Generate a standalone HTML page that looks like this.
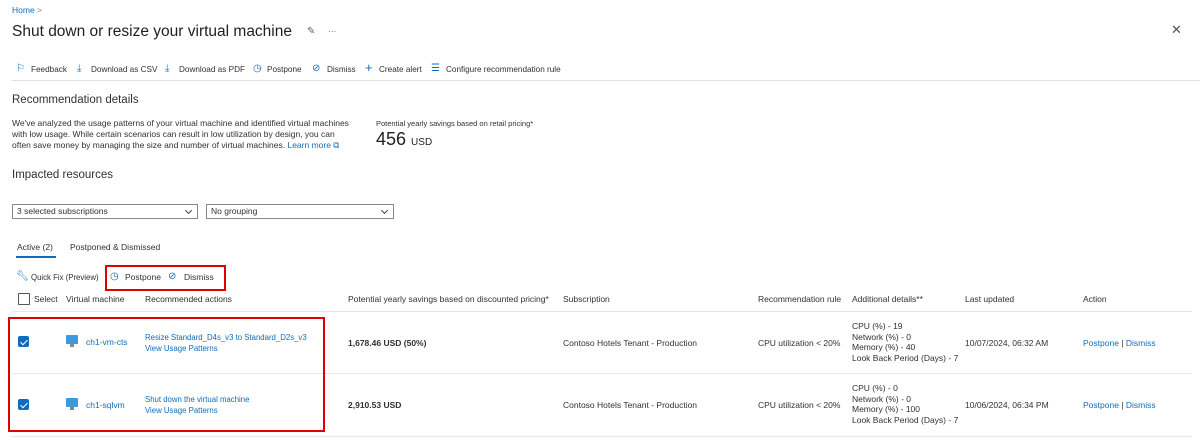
<!DOCTYPE html><html><head><style>
body{margin:0;width:1200px;height:445px;background:#fff;font-family:"Liberation Sans",sans-serif;color:#323130;position:relative;overflow:hidden}
.a{position:absolute;white-space:nowrap;font-size:8.5px;line-height:11px}
.l{color:#0f6cbd}
.h{font-size:8.5px;color:#323130}
.rb{position:absolute;border:2px solid #e00000}
.ln{position:absolute;height:1px;background:#e8e8e8}
.dd{position:absolute;height:13px;border:1px solid #8a8886;font-size:8.5px;line-height:13px;padding-left:4px;box-sizing:content-box}
.dd:after{content:"";position:absolute;right:6px;top:3px;width:4px;height:4px;border-right:1px solid #444;border-bottom:1px solid #444;transform:rotate(45deg)}
.cb{position:absolute;width:11px;height:11px;background:#0f6cbd;border-radius:2px}
.cb:after{content:"";position:absolute;left:3.5px;top:1.5px;width:3px;height:6px;border-right:1px solid #fff;border-bottom:1px solid #fff;transform:rotate(45deg)}
.vm{position:absolute;width:12px;height:9px;background:#3a9bdc;border-radius:1px}
.vm:after{content:"";position:absolute;left:4px;top:9px;width:4px;height:3px;background:#888}
.ic{color:#0f6cbd;font-size:10px}
</style></head><body>
<div class="a l" style="left:12px;top:5px">Home <span style="color:#888">&gt;</span></div>
<div class="a" style="left:12px;top:22px;font-size:15.5px;line-height:20px;color:#201f1e">Shut down or resize your virtual machine</div>
<div class="a" style="left:307px;top:26px;font-size:10px;color:#666">✎</div>
<div class="a" style="left:328px;top:26px;color:#666">···</div>
<div class="a" style="left:1171px;top:24px;font-size:13px;color:#555">✕</div>
<div class="a ic" style="left:16px;top:63px">⚐</div><div class="a" style="left:31px;top:64px;font-size:8.2px">Feedback</div>
<div class="a ic" style="left:77px;top:63px">⤓</div><div class="a" style="left:91px;top:64px;font-size:8.2px">Download as CSV</div>
<div class="a ic" style="left:165px;top:63px">⤓</div><div class="a" style="left:179px;top:64px;font-size:8.2px">Download as PDF</div>
<div class="a ic" style="left:253px;top:63px">◷</div><div class="a" style="left:267px;top:64px;font-size:8.2px">Postpone</div>
<div class="a ic" style="left:312px;top:63px">⊘</div><div class="a" style="left:327px;top:64px;font-size:8.2px">Dismiss</div>
<div class="a ic" style="left:365px;top:62px;font-size:13px">+</div><div class="a" style="left:379px;top:64px;font-size:8.2px">Create alert</div>
<div class="a ic" style="left:431px;top:63px">☰</div><div class="a" style="left:446px;top:64px;font-size:8.2px">Configure recommendation rule</div>
<div class="ln" style="left:12px;top:80px;width:1188px;background:#e1dfdd"></div>
<div class="a" style="left:12px;top:93px;font-size:11.5px;line-height:14px">Recommendation details</div>
<div class="a" style="left:12px;top:118px;line-height:11.2px">We've analyzed the usage patterns of your virtual machine and identified virtual machines<br>with low usage. While certain scenarios can result in low utilization by design, you can<br>often save money by managing the size and number of virtual machines. <span class="l">Learn more ⧉</span></div>
<div class="a" style="left:376px;top:118px;font-size:7.5px">Potential yearly savings based on retail pricing*</div>
<div class="a" style="left:376px;top:129px;font-size:18px;line-height:20px;color:#201f1e">456 <span style="font-size:10px">USD</span></div>
<div class="a" style="left:12px;top:168px;font-size:11.5px;line-height:14px">Impacted resources</div>
<div class="dd" style="left:12px;top:204px;width:180px">3 selected subscriptions</div>
<div class="dd" style="left:206px;top:204px;width:182px">No grouping</div>
<div class="a" style="left:17px;top:242px">Active (2)</div>
<div class="a" style="left:70px;top:242px">Postponed &amp; Dismissed</div>
<div class="ln" style="left:16px;top:256px;width:40px;height:2px;background:#0f6cbd"></div>
<div class="a ic" style="left:16px;top:271px">🔧︎</div><div class="a" style="left:31px;top:272px;font-size:7.8px">Quick Fix (Preview)</div>
<div class="a ic" style="left:110px;top:271px">◷</div><div class="a" style="left:125px;top:272px">Postpone</div>
<div class="a ic" style="left:168px;top:271px">⊘</div><div class="a" style="left:184px;top:272px">Dismiss</div>
<div class="rb" style="left:105px;top:265px;width:117px;height:22px"></div>
<div style="position:absolute;left:18px;top:293px;width:10px;height:10px;border:1px solid #555;border-radius:1px"></div>
<div class="a h" style="left:34px;top:294px">Select</div>
<div class="a h" style="left:66px;top:294px">Virtual machine</div>
<div class="a h" style="left:145px;top:294px">Recommended actions</div>
<div class="a h" style="left:348px;top:294px">Potential yearly savings based on discounted pricing*</div>
<div class="a h" style="left:563px;top:294px">Subscription</div>
<div class="a h" style="left:758px;top:294px">Recommendation rule</div>
<div class="a h" style="left:852px;top:294px">Additional details**</div>
<div class="a h" style="left:965px;top:294px">Last updated</div>
<div class="a h" style="left:1083px;top:294px">Action</div>
<div class="ln" style="left:12px;top:311px;width:1180px"></div>
<div class="cb" style="left:18px;top:336px"></div>
<div class="vm" style="left:66px;top:335px"></div>
<div class="a l" style="left:86px;top:337px">ch1-vm-cts</div>
<div class="a l" style="left:145px;top:332px;font-size:7.8px">Resize Standard_D4s_v3 to Standard_D2s_v3<br>View Usage Patterns</div>
<div class="a" style="left:348px;top:338px;font-weight:bold">1,678.46 USD (50%)</div>
<div class="a" style="left:563px;top:338px">Contoso Hotels Tenant - Production</div>
<div class="a" style="left:758px;top:338px">CPU utilization &lt; 20%</div>
<div class="a" style="left:852px;top:321px;line-height:10.5px">CPU (%) - 19<br>Network (%) - 0<br>Memory (%) - 40<br>Look Back Period (Days) - 7</div>
<div class="a" style="left:965px;top:338px">10/07/2024, 06:32 AM</div>
<div class="a l" style="left:1083px;top:338px">Postpone <span style="color:#333">|</span> Dismiss</div>
<div class="ln" style="left:12px;top:373px;width:1180px"></div>
<div class="cb" style="left:18px;top:399px"></div>
<div class="vm" style="left:66px;top:398px"></div>
<div class="a l" style="left:86px;top:400px">ch1-sqlvm</div>
<div class="a l" style="left:145px;top:394px;font-size:7.8px">Shut down the virtual machine<br>View Usage Patterns</div>
<div class="a" style="left:348px;top:400px;font-weight:bold">2,910.53 USD</div>
<div class="a" style="left:563px;top:400px">Contoso Hotels Tenant - Production</div>
<div class="a" style="left:758px;top:400px">CPU utilization &lt; 20%</div>
<div class="a" style="left:852px;top:383px;line-height:10.5px">CPU (%) - 0<br>Network (%) - 0<br>Memory (%) - 100<br>Look Back Period (Days) - 7</div>
<div class="a" style="left:965px;top:400px">10/06/2024, 06:34 PM</div>
<div class="a l" style="left:1083px;top:400px">Postpone <span style="color:#333">|</span> Dismiss</div>
<div class="ln" style="left:12px;top:436px;width:1180px"></div>
<div class="rb" style="left:8px;top:317px;width:313px;height:111px"></div>
</body></html>
